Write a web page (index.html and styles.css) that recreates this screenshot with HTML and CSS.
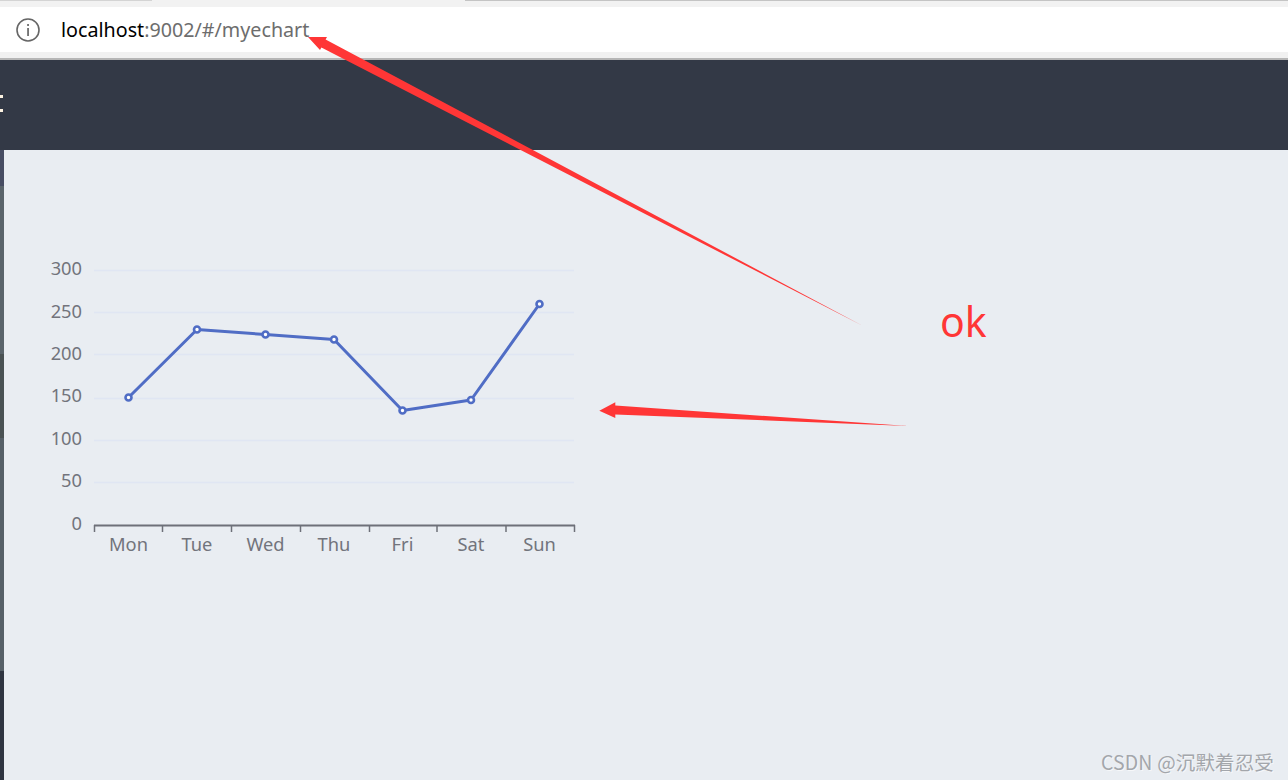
FILE: index.html
```html
<!DOCTYPE html>
<html lang="en">
<head>
<meta charset="utf-8">
<title>myechart</title>
<link rel="stylesheet" href="styles.css">
</head>
<body>
<div class="browser">
  <div class="tabstrip"><span class="tab-left"></span><span class="tab-active"></span><span class="tab-right"></span></div>
  <div class="address">
    <svg class="info" width="24" height="24" viewBox="0 0 24 24" aria-hidden="true">
      <circle cx="12" cy="12" r="11" fill="none" stroke="#666" stroke-width="1.6"/>
      <rect x="11.2" y="6" width="1.7" height="2" fill="#666"/>
      <rect x="11.2" y="10" width="1.7" height="8" fill="#666"/>
    </svg>
    <span class="url"><span class="host">localhost</span>:9002/#/myechart</span>
  </div>
  <div class="address-foot"></div>
</div>
<header class="topbar"><span class="colon"><i></i><i></i></span></header>
<div class="body">
  <aside class="side">
    <span class="seg seg1"></span>
    <span class="seg seg2"></span>
    <span class="seg seg3"></span>
    <span class="seg seg4"></span>
    <span class="seg seg5"></span>
  </aside>
  <main class="main">
    <svg class="chart" width="600" height="420" viewBox="4 150 600 420">
      <g class="grid">
        <line x1="94" x2="574" y1="270.5" y2="270.5"/>
        <line x1="94" x2="574" y1="312.5" y2="312.5"/>
        <line x1="94" x2="574" y1="354.5" y2="354.5"/>
        <line x1="94" x2="574" y1="398.5" y2="398.5"/>
        <line x1="94" x2="574" y1="440.5" y2="440.5"/>
        <line x1="94" x2="574" y1="482.5" y2="482.5"/>
      </g>
      <g class="ylabels">
        <text x="82" y="275">300</text>
        <text x="82" y="318">250</text>
        <text x="82" y="360">200</text>
        <text x="82" y="402">150</text>
        <text x="82" y="445">100</text>
        <text x="82" y="487">50</text>
        <text x="82" y="530">0</text>
      </g>
      <g class="axis">
        <line x1="94" x2="575" y1="525.5" y2="525.5"/>
        <line x1="94.5" x2="94.5" y1="525" y2="532"/>
        <line x1="162.5" x2="162.5" y1="525" y2="532"/>
        <line x1="231.5" x2="231.5" y1="525" y2="532"/>
        <line x1="300.5" x2="300.5" y1="525" y2="532"/>
        <line x1="369.5" x2="369.5" y1="525" y2="532"/>
        <line x1="437" x2="437" y1="525" y2="532"/>
        <line x1="506" x2="506" y1="525" y2="532"/>
        <line x1="574.5" x2="574.5" y1="525" y2="532"/>
      </g>
      <g class="xlabels">
        <text x="128.5" y="551">Mon</text>
        <text x="197" y="551">Tue</text>
        <text x="265.5" y="551">Wed</text>
        <text x="334" y="551">Thu</text>
        <text x="402.5" y="551">Fri</text>
        <text x="471" y="551">Sat</text>
        <text x="539.5" y="551">Sun</text>
      </g>
      <polyline class="series" points="128.5,397.5 197,329.5 265.5,334.5 334,339.5 402.5,410.5 471,400 539.5,304"/>
      <g class="points">
        <circle cx="128.5" cy="397.5" r="3"/>
        <circle cx="197" cy="329.5" r="3"/>
        <circle cx="265.5" cy="334.5" r="3"/>
        <circle cx="334" cy="339.5" r="3"/>
        <circle cx="402.5" cy="410.5" r="3"/>
        <circle cx="471" cy="400" r="3"/>
        <circle cx="539.5" cy="304" r="3"/>
      </g>
    </svg>
  </main>
</div>
<svg class="marks" width="1288" height="780" viewBox="0 0 1288 780" aria-hidden="true">
  <polygon points="308,37 327,37 325.6,39.6 863,326 321.4,47.4 320,50"/>
  <polygon points="599.3,410.7 615.3,402.3 615.3,405.6 908,426 615.3,414.4 615.3,418"/>
</svg>
<div class="ok">ok</div>
<div class="watermark">CSDN @沉默着忍受</div>
</body>
</html>
```

FILE: styles.css
```css
html, body {
  margin: 0;
  padding: 0;
}

body {
  width: 1288px;
  height: 780px;
  overflow: hidden;
  position: relative;
  background: #e9edf2;
  font-family: "Noto Sans", "Noto Sans CJK SC", sans-serif;
  display: flex;
  flex-direction: column;
}

.browser {
  flex: none;
  height: 60px;
  display: flex;
  flex-direction: column;
}

.tabstrip {
  flex: none;
  height: 7px;
  background: #f2f2f2;
  display: flex;
  align-items: flex-start;
}

.tab-left {
  width: 152px;
  height: 1px;
  background: #d4d4d4;
}

.tab-active {
  width: 313px;
  height: 1px;
  background: #f2f2f2;
}

.tab-right {
  flex: 1;
  height: 1px;
  background: #c4c4c4;
}

.address {
  flex: none;
  height: 45px;
  background: #fff;
  display: flex;
  align-items: center;
  padding-left: 16px;
}

.info {
  flex: none;
}

.url {
  margin-left: 21px;
  font-size: 19.7px;
  line-height: 45px;
  color: #6d6d6d;
  white-space: nowrap;
}

.host {
  color: #000;
}

.address-foot {
  flex: none;
  height: 6px;
  background: #f1f1f1;
  border-bottom: 2px solid #b6b6b6;
}

.topbar {
  flex: none;
  height: 90px;
  background: #333946;
  display: flex;
  align-items: center;
}

.colon {
  display: flex;
  flex-direction: column;
  gap: 11px;
  margin-top: -3px;
}

.colon i {
  display: block;
  width: 3px;
  height: 3px;
  background: #fdf3e2;
}

.body {
  flex: 1;
  display: flex;
  min-height: 0;
}

.side {
  flex: none;
  width: 4px;
  display: flex;
  flex-direction: column;
}

.seg {
  display: block;
}

.seg1 { height: 36px; background: #474d63; }
.seg2 { height: 168px; background: #5a646b; }
.seg3 { height: 84px; background: #4a5254; }
.seg4 { height: 233px; background: #566068; }
.seg5 { flex: 1; background: #2f3541; }

.main {
  flex: 1;
  background: #e9edf2;
}

.chart {
  display: block;
}

.grid line {
  stroke: #e0e6f3;
  stroke-width: 1.5;
}

.axis line {
  stroke: #6e7079;
  stroke-width: 1.5;
}

.axis line:first-child {
  stroke-width: 2;
}

.ylabels text,
.xlabels text {
  font-family: "Noto Sans", sans-serif;
  font-size: 18.3px;
  fill: #72747c;
}

.ylabels text {
  text-anchor: end;
}

.xlabels text {
  text-anchor: middle;
}

.series {
  fill: none;
  stroke: #506dc5;
  stroke-width: 3;
  stroke-linejoin: round;
}

.points circle {
  fill: #fff;
  stroke: #506dc5;
  stroke-width: 2.6;
}

.marks {
  position: absolute;
  left: 0;
  top: 0;
  pointer-events: none;
}

.marks polygon {
  fill: #ff3636;
}

.ok {
  position: absolute;
  left: 940px;
  top: 294px;
  font-size: 41px;
  line-height: 54px;
  color: #ff3636;
}

.watermark {
  position: absolute;
  right: 14px;
  top: 749px;
  font-family: "Noto Sans CJK SC", "Noto Sans", sans-serif;
  font-size: 19.5px;
  letter-spacing: 0.15px;
  line-height: 26px;
  color: #a3a6ab;
  text-shadow: 1px 1px 0 #f6f7f9;
  white-space: nowrap;
}
```
